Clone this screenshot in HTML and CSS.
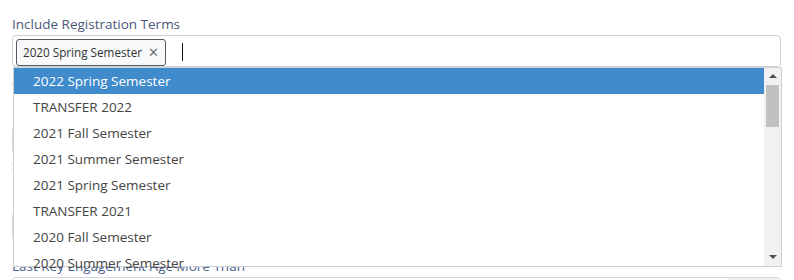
FILE: index.html
```html
<!DOCTYPE html>
<html lang="en">
<head>
<meta charset="utf-8">
<title>Filters</title>
<link rel="stylesheet" href="styles.css">
</head>
<body>
<div class="form">
  <div class="field first">
    <label class="label">Include Registration Terms</label>
    <div class="select">
      <span class="tag">2020 Spring Semester <span class="tag-x">✕</span></span>
      <span class="caret"></span>
    </div>
  </div>
  <div class="help h1">Current terms only</div>
  <div class="field f2">
    <label class="label">Include Programs</label>
    <div class="input"></div>
  </div>
  <div class="help h2">Select one or more programs</div>
  <div class="field f3">
    <label class="label">Include Statuses</label>
    <div class="input"></div>
  </div>
  <div class="field f4">
    <label class="label">Last Key Engagement Age More Than</label>
    <div class="input addon-input"><span class="addon"></span></div>
  </div>

  <div class="dropdown">
    <ul class="options">
      <li class="opt active">2022 Spring Semester</li>
      <li class="opt">TRANSFER 2022</li>
      <li class="opt">2021 Fall Semester</li>
      <li class="opt">2021 Summer Semester</li>
      <li class="opt">2021 Spring Semester</li>
      <li class="opt">TRANSFER 2021</li>
      <li class="opt">2020 Fall Semester</li>
      <li class="opt">2020 Summer Semester</li>
    </ul>
    <div class="scrollbar">
      <span class="arrow up"></span>
      <span class="thumb"></span>
      <span class="arrow down"></span>
    </div>
  </div>
</div>
</body>
</html>
```
FILE: styles.css
```css
* { box-sizing: border-box; }
html, body { margin: 0; padding: 0; background: #fff; }
body {
  font-family: "Open Sans", "Noto Sans", "Liberation Sans", sans-serif;
  font-size: 13px;
  color: #333;
  overflow: hidden;
  height: 280px;
}
.form {
  position: relative;
  padding: 14px 13px 0 12px;
  width: 794px;
}
.field { display: flex; flex-direction: column; }
.label {
  display: block;
  font-size: 13.5px;
  line-height: 20px;
  color: #4a5779;
  height: 21px;
  white-space: nowrap;
}
.select {
  height: 32px;
  border: 1px solid #cdd0d6;
  border-radius: 4px;
  display: flex;
  align-items: center;
  padding: 0 3px;
  gap: 16px;
}
.tag {
  display: inline-flex;
  align-items: center;
  height: 27px;
  margin-top: 2px;
  padding: 0 6px 0 6px;
  border: 1px solid #555a60;
  border-radius: 3px;
  background: #f8f9fa;
  font-size: 11.7px;
  color: #333;
  white-space: nowrap;
}
.tag-x { margin-left: 6px; color: #707070; font-size: 13px; line-height: 1; }
.caret { width: 1px; height: 18px; background: #111; margin-top: 2px; }
.help { font-size: 12px; color: #8a8f98; line-height: 16px; white-space: nowrap; }
.h1 { margin-top: 9px; }
.h2 { margin-top: 4px; }
.f2 { margin-top: 13px; }
.f3 { margin-top: 17px; }
.f4 { margin-top: 16px; }
.input {
  height: 28px;
  border: 1px solid #d4d7dd;
  border-radius: 4px;
}
.f4 .input { height: 32px; }
.addon-input { display: flex; justify-content: flex-end; overflow: hidden; }
.addon { width: 51px; background: #eef0f3; border-left: 1px solid #d4d7dd; }
.f4 .label { color: #48608e; }

.dropdown {
  position: absolute;
  left: 13px;
  top: 67px;
  width: 769px;
  height: 200px;
  background: #fff;
  border: 1px solid #cfcfcf;
  border-top: 1px solid #d0d3d8;
  z-index: 5;
  display: flex;
}
.options {
  list-style: none;
  margin: 0;
  padding: 0;
  flex: 1;
  height: 198px;
}
.opt {
  height: 26px;
  line-height: 26px;
  padding-left: 19px;
  font-size: 13.5px;
  color: #444;
  white-space: nowrap;
}
.opt.active { background: #3f8bcb; color: #fff; }
.scrollbar {
  width: 17px;
  background: #f1f1f1;
  display: flex;
  flex-direction: column;
  align-items: center;
  height: 198px;
}
.arrow { width: 0; height: 0; border-left: 4px solid transparent; border-right: 4px solid transparent; }
.arrow.up { border-bottom: 4px solid #505050; margin-top: 6px; }
.arrow.down { border-top: 4px solid #505050; margin-top: auto; margin-bottom: 7px; }
.thumb { width: 13px; height: 42px; background: #c1c1c1; margin-top: 7px; }
```
